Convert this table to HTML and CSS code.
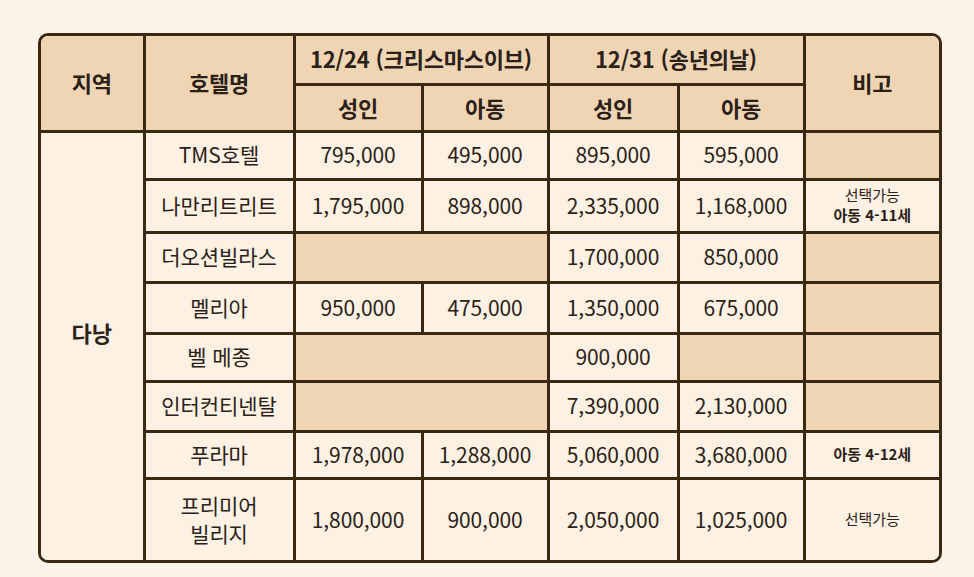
FILE: index.html
```html
<!DOCTYPE html>
<html lang="ko">
<head>
<meta charset="utf-8">
<title>호텔 요금표</title>
<link rel="stylesheet" href="styles.css">
</head>
<body>
<div class="frame">
  <table class="rates">
    <colgroup>
      <col class="c-region">
      <col class="c-hotel">
      <col class="c-a">
      <col class="c-b">
      <col class="c-c">
      <col class="c-d">
      <col class="c-note">
    </colgroup>
    <thead>
      <tr class="h1">
        <th rowspan="2">지역</th>
        <th rowspan="2">호텔명</th>
        <th colspan="2">12/24 (크리스마스이브)</th>
        <th colspan="2">12/31 (송년의날)</th>
        <th rowspan="2">비고</th>
      </tr>
      <tr class="h2">
        <th>성인</th>
        <th>아동</th>
        <th>성인</th>
        <th>아동</th>
      </tr>
    </thead>
    <tbody>
      <tr class="r1">
        <td rowspan="8" class="region">다낭</td>
        <td>TMS호텔</td>
        <td>795,000</td>
        <td>495,000</td>
        <td>895,000</td>
        <td>595,000</td>
        <td class="empty"></td>
      </tr>
      <tr class="r2">
        <td>나만리트리트</td>
        <td>1,795,000</td>
        <td>898,000</td>
        <td>2,335,000</td>
        <td>1,168,000</td>
        <td class="note"><span class="n-light">선택가능</span><br><span class="n-bold">아동 4-11세</span></td>
      </tr>
      <tr class="r3">
        <td>더오션빌라스</td>
        <td colspan="2" class="empty"></td>
        <td>1,700,000</td>
        <td>850,000</td>
        <td class="empty"></td>
      </tr>
      <tr class="r4">
        <td>멜리아</td>
        <td>950,000</td>
        <td>475,000</td>
        <td>1,350,000</td>
        <td>675,000</td>
        <td class="empty"></td>
      </tr>
      <tr class="r5">
        <td>벨 메종</td>
        <td colspan="2" class="empty"></td>
        <td>900,000</td>
        <td class="empty"></td>
        <td class="empty"></td>
      </tr>
      <tr class="r6">
        <td>인터컨티넨탈</td>
        <td colspan="2" class="empty"></td>
        <td>7,390,000</td>
        <td>2,130,000</td>
        <td class="empty"></td>
      </tr>
      <tr class="r7">
        <td>푸라마</td>
        <td>1,978,000</td>
        <td>1,288,000</td>
        <td>5,060,000</td>
        <td>3,680,000</td>
        <td class="note"><span class="n-bold">아동 4-12세</span></td>
      </tr>
      <tr class="r8">
        <td class="two">프리미어<br>빌리지</td>
        <td>1,800,000</td>
        <td>900,000</td>
        <td>2,050,000</td>
        <td>1,025,000</td>
        <td class="note"><span class="n-light">선택가능</span></td>
      </tr>
    </tbody>
  </table>
</div>
</body>
</html>
```

FILE: styles.css
```css
html, body {
  margin: 0;
  padding: 0;
  background: #fdf3e8;
}
body {
  padding: 33px 0 0 38px;
  font-family: "Noto Sans CJK KR", "Noto Sans", sans-serif;
  color: #2b2118;
}
.frame {
  width: 898px;
  border: 3px solid #3a2812;
  border-radius: 10px;
  overflow: hidden;
  background: #fdf1e3;
}
.rates {
  width: 898px;
  table-layout: fixed;
  border-collapse: collapse;
  border-style: hidden;
}
.c-region { width: 103px; }
.c-hotel { width: 150px; }
.c-a { width: 128px; }
.c-b { width: 126px; }
.c-c { width: 130px; }
.c-d { width: 126px; }
.c-note { width: 135px; }

.rates th,
.rates td {
  border: 3px solid #3a2812;
  padding: 0 0 2px;
  text-align: center;
  vertical-align: middle;
}
.rates th {
  background: #f0d5b5;
  font-size: 22px;
  font-weight: 700;
  letter-spacing: -0.2px;
}
.rates td {
  background: #fdf1e3;
  font-size: 21px;
  font-weight: 400;
  letter-spacing: -0.1px;
}
.rates td.empty {
  background: #f0d5b5;
}
.rates td.region {
  font-size: 22px;
  font-weight: 700;
  background: #fdf1e3;
  padding-bottom: 28px;
}
.rates td.two {
  line-height: 28px;
}
.rates td.note {
  font-size: 15px;
  line-height: 20px;
  letter-spacing: 0;
}
.n-light { font-weight: 400; }
.n-bold { font-weight: 700; }

.h1 { height: 48px; }
.h2 { height: 47px; }
.r1 { height: 48px; }
.r2 { height: 53px; }
.r3 { height: 50px; }
.r4 { height: 51px; }
.r5 { height: 48px; }
.r6 { height: 50px; }
.r7 { height: 47px; }
.r8 { height: 82px; }
```
